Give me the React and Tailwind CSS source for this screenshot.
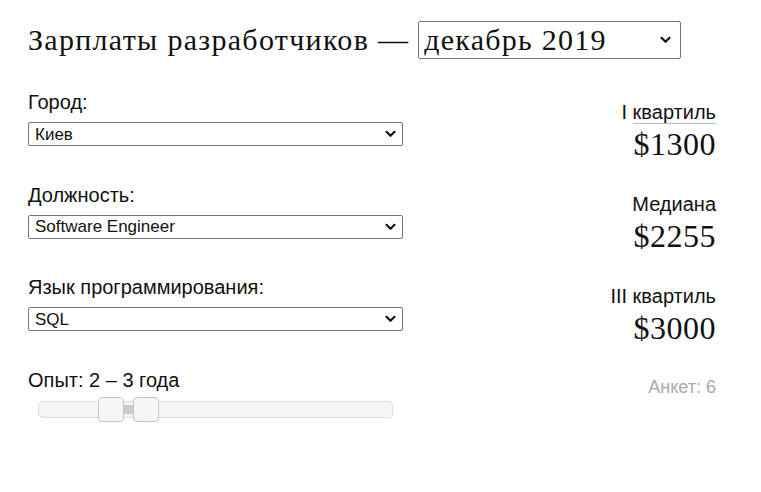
import { useState } from 'react';

const serif = { fontFamily: '"Liberation Serif", "DejaVu Serif", serif' };

function Chevron() {
  return (
    <svg width="11" height="8" viewBox="0 0 11 8" className="shrink-0">
      <polyline points="1.5,1.8 5.5,5.8 9.5,1.8" fill="none" stroke="#111" strokeWidth="2.2" strokeLinecap="round" strokeLinejoin="round" />
    </svg>
  );
}

function FakeSelect({ value }) {
  return (
    <div className="flex items-center justify-between h-[24px] w-[375px] border border-[#767676] rounded-[2px] bg-white pl-[6px] pr-[6px] text-[17px] leading-none text-[#111]">
      <span>{value}</span>
      <Chevron />
    </div>
  );
}

function Field({ label, value }) {
  return (
    <div className="h-[92.5px]">
      <div className="text-[20px] leading-[24px] text-[#111]">{label}</div>
      <div className="mt-[8px]">
        <FakeSelect value={value} />
      </div>
    </div>
  );
}

function Stat({ label, value }) {
  return (
    <div className="h-[92px] flex flex-col items-end">
      <div className="text-[20px] leading-[24px] text-[#111]">{label}</div>
      <div className="text-[32px] leading-[36px] mt-[2px] tracking-[0.5px] text-[#111]" style={serif}>{value}</div>
    </div>
  );
}

export default function App() {
  const [period] = useState('декабрь 2019');

  return (
    <div className="w-[761px] h-[492px] bg-white" style={{ fontFamily: '"Liberation Sans", Arial, sans-serif' }}>
      <div className="ml-[28px] w-[688px] pt-[17px]">
        {/* Title */}
        <div className="flex items-center text-[30px] tracking-[1.3px] text-[#111]" style={serif}>
          <span>Зарплаты разработчиков —</span>
          <div className="ml-[9px] flex items-center justify-between h-[38px] w-[263px] border border-[#767676] rounded-[2px] pl-[5px] pr-[9px] tracking-[1.25px]">
            <span className="leading-none">{period}</span>
            <Chevron />
          </div>
        </div>

        <div className="flex justify-between mt-[28px]">
          {/* Filters */}
          <div className="w-[375px]">
            <Field label="Город:" value="Киев" />
            <Field label="Должность:" value="Software Engineer" />
            <Field label="Язык программирования:" value="SQL" />
            <div className="text-[20px] leading-[24px] text-[#111]">Опыт: 2 – 3 года</div>
            <div className="relative mt-[9px] ml-[10px] w-[355px] h-[17px] border border-[#dddddd] rounded-[5px] bg-[#f5f5f5]">
              <div className="absolute top-[3px] bottom-[3px] left-[84px] w-[12px] bg-[#cccccc]" />
              <div className="absolute top-[-5px] left-[59px] w-[26px] h-[25px] border border-[#c5c5c5] rounded-[4px] bg-[#f6f6f6]" />
              <div className="absolute top-[-5px] left-[94px] w-[26px] h-[25px] border border-[#c5c5c5] rounded-[4px] bg-[#f6f6f6]" />
            </div>
          </div>

          {/* Stats */}
          <div className="flex flex-col items-end pt-[10px]">
            <div className="h-[92px] flex flex-col items-end">
              <div className="text-[20px] leading-[24px] text-[#111]">
                I <span className="border-b border-[#bbbbbb]">квартиль</span>
              </div>
              <div className="text-[32px] leading-[36px] mt-[2px] tracking-[0.5px] text-[#111]" style={serif}>$1300</div>
            </div>
            <Stat label="Медиана" value="$2255" />
            <Stat label="III квартиль" value="$3000" />
            <div className="text-[18px] leading-[22px] text-[#aaaaaa]">Анкет: 6</div>
          </div>
        </div>
      </div>
    </div>
  );
}
